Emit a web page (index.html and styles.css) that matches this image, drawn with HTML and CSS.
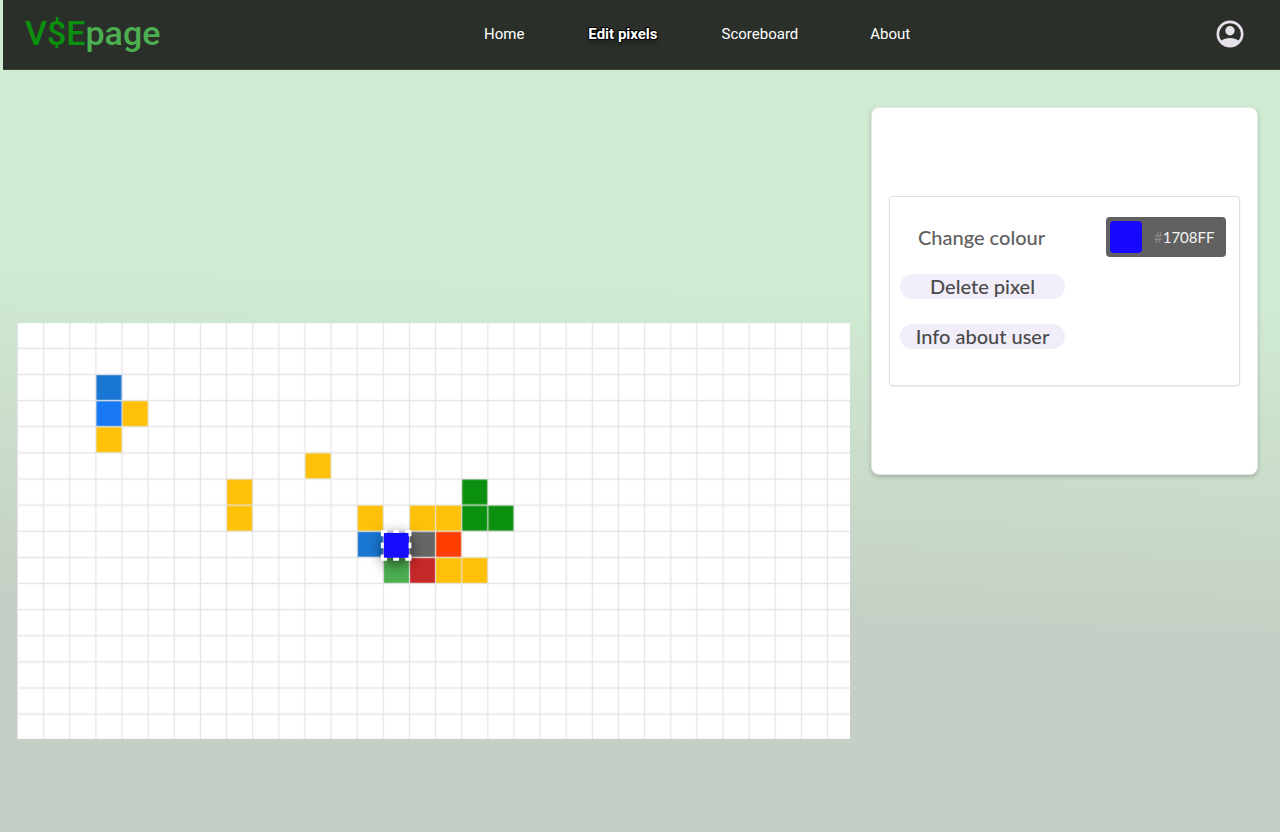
FILE: index.html
```html
<!DOCTYPE html>
<html lang="en">
<head>
<meta charset="utf-8">
<meta name="viewport" content="width=device-width, initial-scale=1">
<title>V$Epage – Edit pixels</title>
<link rel="stylesheet" href="styles.css">
</head>
<body>
<header class="topbar">
  <a class="logo" href="#"><span class="logo-strong">V$E</span>page</a>
  <nav class="nav" aria-label="Main">
    <a class="nav-link" href="#">Home</a>
    <a class="nav-link nav-link-active" href="#" aria-current="page">Edit pixels</a>
    <a class="nav-link" href="#">Scoreboard</a>
    <a class="nav-link" href="#">About</a>
  </nav>
  <button class="account" type="button" aria-label="Account">
    <svg class="account-icon" viewBox="0 0 28 28" aria-hidden="true">
      <path fill="#e6e0e9" fill-rule="evenodd" d="M14 .5a13.5 13.5 0 1 0 0 27a13.5 13.5 0 0 0 0-27zM14 3.2a10.8 10.8 0 0 1 8.6 17.3C20.6 19 17.5 18 14 18S7.4 19 5.4 20.5A10.8 10.8 0 0 1 14 3.2z"/>
      <circle cx="14" cy="10.8" r="4.7" fill="#e6e0e9"/>
    </svg>
  </button>
</header>
<main class="workspace">
  <svg class="board" viewBox="-2 3 3188 1592" role="img" aria-label="Pixel board">
    <defs>
      <pattern id="grid" width="100" height="100" patternUnits="userSpaceOnUse" x="-50" y="-50">
        <path d="M50 0V100M0 50H100" stroke="#e2e2e2" stroke-width="5" fill="none"/>
      </pattern>
      <filter id="lift" x="-100%" y="-100%" width="300%" height="300%">
        <feDropShadow dx="0" dy="15" stdDeviation="28" flood-color="#000" flood-opacity="0.75"/>
      </filter>
    </defs>
    <rect x="-2" y="3" width="3188" height="1592" fill="#fff"/>
    <g>
      <path fill="#1976d2" d="M300 200h100v100h-100zM1300 800h100v100h-100z"/>
      <path fill="#1877f2" d="M300 300h100v100h-100z"/>
      <path fill="#ffc107" d="M400 300h100v100h-100zM300 400h100v100h-100zM800 600h100v200h-100zM1100 500h100v100h-100zM1300 700h100v100h-100zM1500 700h200v100h-200zM1600 900h200v100h-200z"/>
      <path fill="#0a8f0f" d="M1700 600h100v100h100v100h-200z"/>
      <path fill="#666" d="M1500 800h100v100h-100z"/>
      <path fill="#ff3d00" d="M1600 800h100v100h-100z"/>
      <path fill="#4caf50" d="M1400 900h100v100h-100z"/>
      <path fill="#c62828" d="M1500 900h100v100h-100z"/>
    </g>
    <rect class="grid-lines" x="-2" y="3" width="3188" height="1592" fill="url(#grid)"/>
    <rect x="1402" y="806" width="96" height="96" fill="#1708ff" filter="url(#lift)"/>
    <path d="M1449 801H1502V907H1396V801Z" fill="none" stroke="#fff" stroke-width="11" stroke-dasharray="22 24 36 24" stroke-dashoffset="11"/>
  </svg>
  <aside class="panel">
    <form class="tools">
      <div class="colour-row">
        <label class="colour-label" for="hex">Change colour</label>
        <div class="colour-field">
          <span class="swatch"></span>
          <span class="hash">#</span>
          <input class="hex" id="hex" type="text" value="1708FF" maxlength="6">
        </div>
      </div>
      <button class="pill" type="button">Delete pixel</button>
      <button class="pill" type="button">Info about user</button>
    </form>
  </aside>
</main>
</body>
</html>
```
FILE: styles.css
```css
* {
  box-sizing: border-box;
}

body {
  margin: 0;
  min-height: 100vh;
  font-family: Roboto, sans-serif;
  background: linear-gradient(182deg, #d0ebd2 0%, #d0ebd2 35%, #c5cfc5 73%, #c5cfc5 100%);
}

.topbar {
  display: grid;
  grid-template-columns: 458fr auto 333fr;
  align-items: center;
  height: 70px;
  margin-left: 3px;
  padding: 0 36px 2px 22px;
  background: #2b2f2a;
  border-bottom: 1px solid #3b443b;
}

.logo {
  padding-bottom: 2px;
  color: #4caf50;
  font-size: 34px;
  font-weight: 500;
  line-height: 40px;
  text-decoration: none;
}

.logo-strong {
  color: #0a8f0f;
}

.nav {
  display: flex;
  gap: 64px;
}

.nav-link {
  color: #fff;
  font-size: 15px;
  line-height: 20px;
  text-decoration: none;
}

.nav-link:last-child {
  margin-left: 8px;
}

.nav-link-active {
  font-weight: 700;
  text-shadow: 1px 0 #000, -1px 0 #000, 0 1px #000, 0 -1px #000, 1px 1px #000, -1px -1px #000, 0 4px 4px rgba(0, 0, 0, 0.4);
}

.account {
  justify-self: end;
  width: 28px;
  height: 28px;
  padding: 0;
  border: 0;
  background: none;
}

.account-icon {
  display: block;
  width: 100%;
}

.workspace {
  display: grid;
  grid-template-columns: minmax(0, 833fr) minmax(0, 387fr);
  column-gap: 21px;
  align-items: start;
  padding: 37px 22px 93px 17px;
}

.board {
  display: block;
  width: 100%;
  margin-top: 216px;
}

.grid-lines {
  opacity: 0.9;
}

.panel {
  padding: 88px 17px;
  background: #fff;
  border: 1px solid #e6e9e6;
  border-radius: 8px;
  box-shadow: 0 2px 4px rgba(0, 0, 0, 0.2);
}

.tools {
  display: flex;
  flex-direction: column;
  align-items: flex-start;
  gap: 25px;
  padding: 20px 13px 36px 10px;
  border: 1px solid #e0e0e0;
  border-radius: 3px;
  box-shadow: 0 1px 2px rgba(0, 0, 0, 0.08);
  font-family: Lato, sans-serif;
}

.colour-row {
  display: flex;
  align-items: center;
  justify-content: space-between;
  align-self: stretch;
  margin-bottom: -8px;
  padding-left: 18px;
}

.colour-label {
  color: #606060;
  font-size: 20px;
  font-weight: 500;
}

.colour-field {
  display: flex;
  align-items: center;
  width: 120px;
  height: 40px;
  padding: 4px;
  background: #616161;
  border-radius: 4px;
}

.swatch {
  width: 32px;
  height: 32px;
  margin-right: 12px;
  border-radius: 4px;
  background: #1708ff;
}

.hash {
  color: #8c8c8c;
  font-size: 15px;
}

.hex {
  flex: 1;
  min-width: 0;
  padding: 0;
  border: 0;
  background: none;
  color: #f5f5f5;
  font: 15px Lato, sans-serif;
}

.pill {
  width: 165px;
  height: 25px;
  padding: 0;
  border: 0;
  border-radius: 13px;
  background: #f1eefa;
  color: #4a4a4a;
  font: 500 20px/25px Lato, sans-serif;
}
```
